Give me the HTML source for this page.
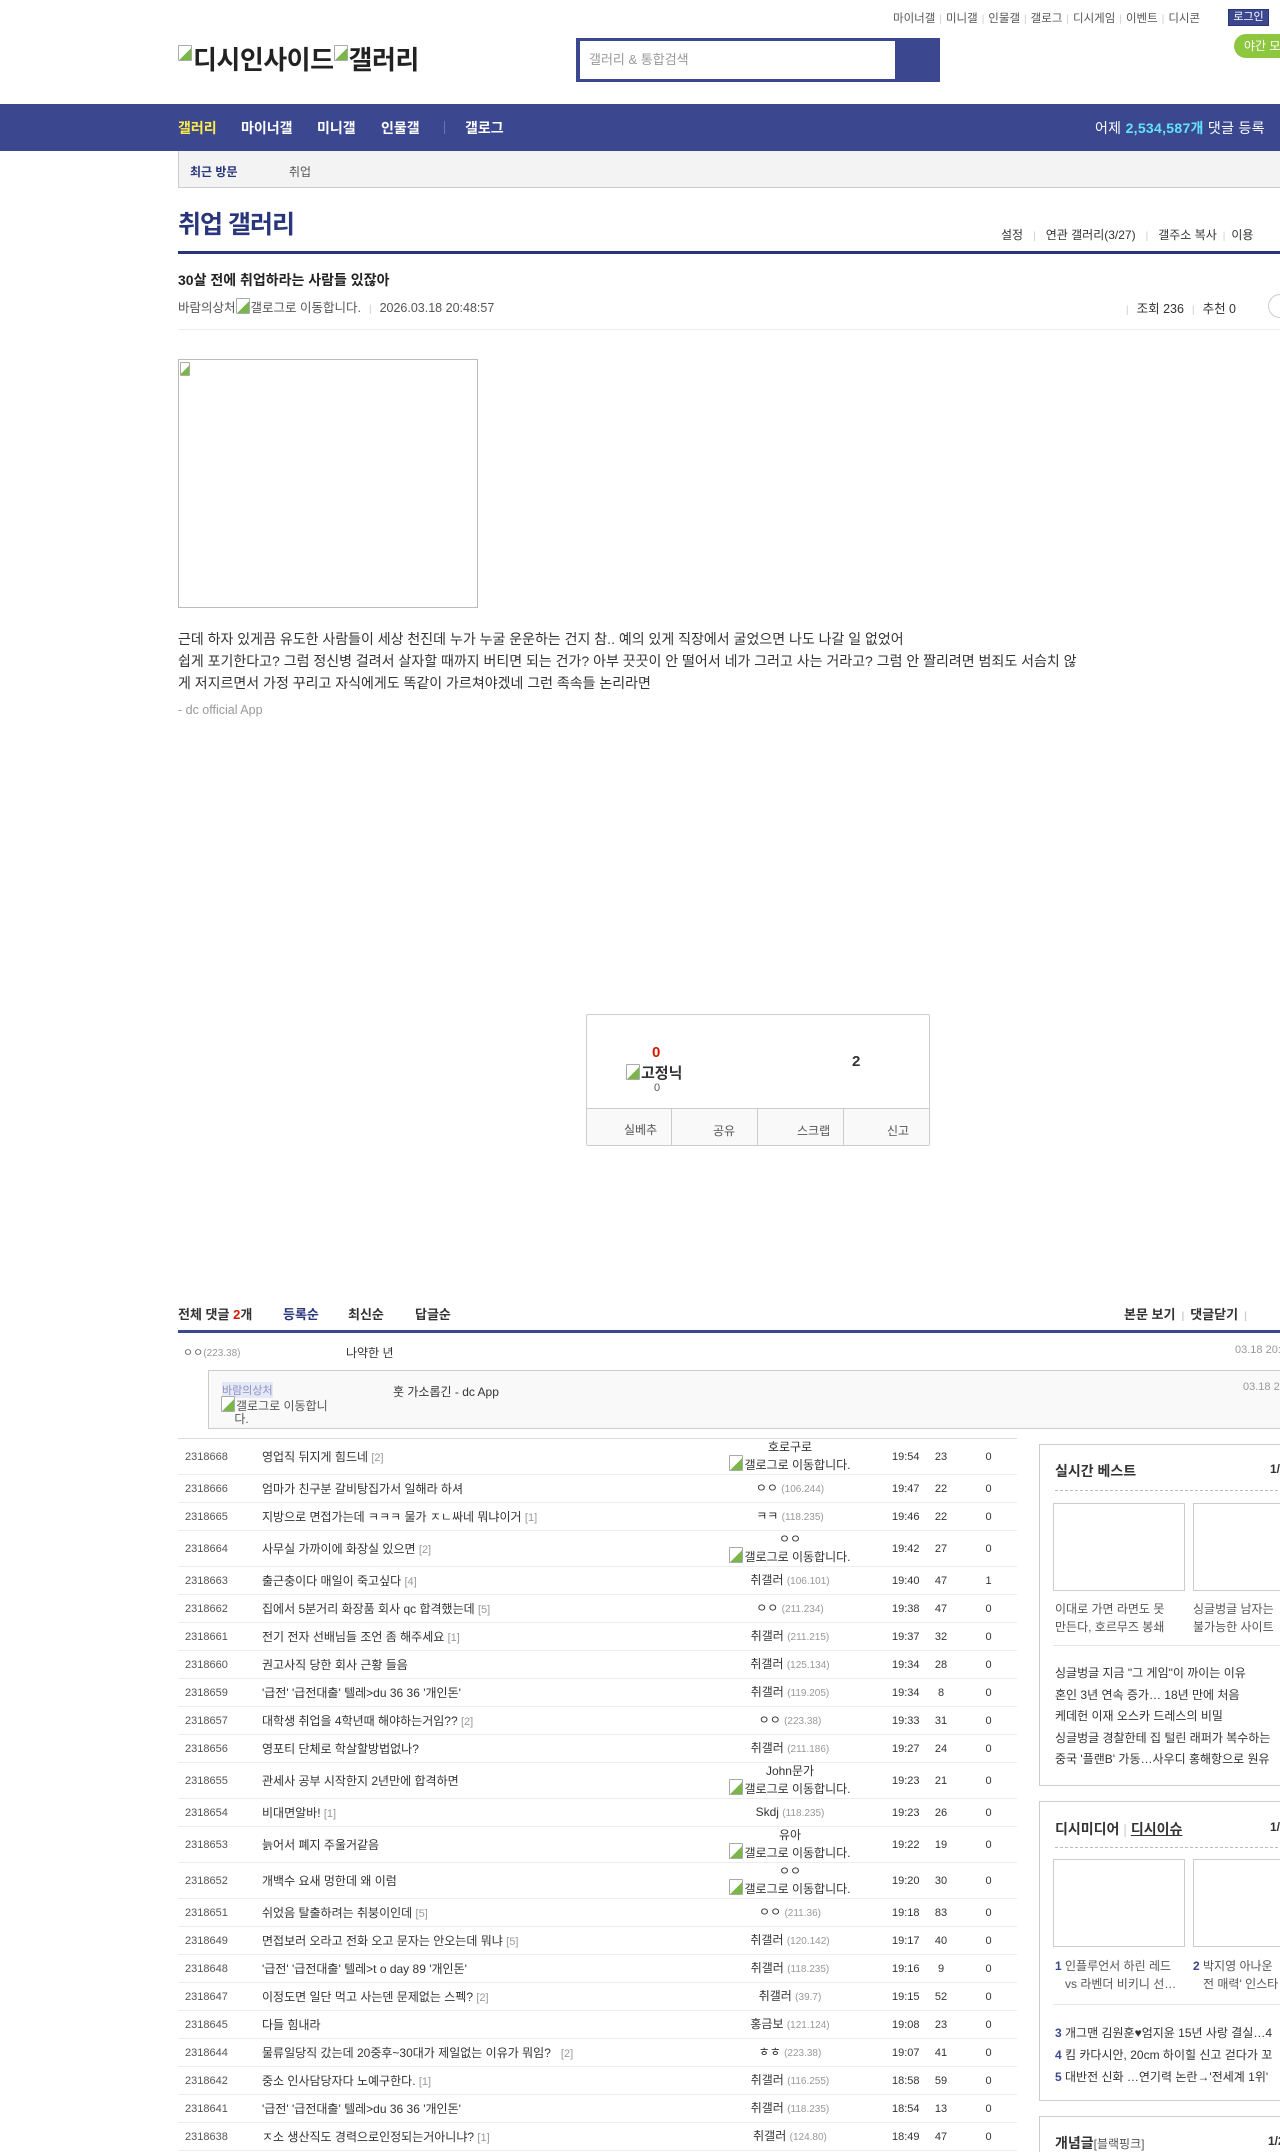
<!DOCTYPE html>
<html><head><meta charset="utf-8">
<style>
*{margin:0;padding:0;box-sizing:border-box}
html,body{width:1280px;height:2152px;overflow:hidden;background:#fff}
body{position:relative;font-family:"Liberation Sans","Noto Sans CJK KR",sans-serif;color:#333;font-size:12px}
.a{position:absolute;white-space:nowrap}
.bi{display:inline-block;width:14px;height:16px;border:1px solid #aaa;border-radius:1px;background:linear-gradient(135deg,#fff 55%,#7ab648 55%);vertical-align:-2px;margin-right:1px}
.top a{color:#555;font-size:11.5px;text-decoration:none}
.sep{color:#ccc;margin:0 4px;font-size:10px}
.nav span{color:#fff;font-weight:bold;font-size:14px;position:absolute;top:14px}
table{border-collapse:collapse;table-layout:fixed}
.lst{position:absolute;left:178px;top:1438px;width:839px;border-top:1px solid #ddd}
.lst td{border-bottom:1px solid #eee;font-size:12px;color:#333;padding:0;vertical-align:middle;white-space:nowrap}
.lst tr{height:28px}
.lst tr.t{height:36px}
.num{width:84px;padding-left:7px!important;font-size:11px!important;color:#555!important}
.tit{width:440px}
.wr{width:176px;text-align:center;line-height:15px}
.tm{width:44px;padding-left:14px!important;font-size:11px!important}
.vw{width:38px;text-align:center;font-size:11px!important}
.rc{width:57px;text-align:center;font-size:11px!important}
.ip{color:#999;font-size:10px}
.rp{color:#999;font-size:11px}
.box{position:absolute;left:1039px;width:280px;border:1px solid #ccc;background:#fff}
.box h3{position:absolute;left:15px;font-size:14px;color:#333}
.dash{position:absolute;left:15px;right:0;border-top:1px dashed #bbb}
.th{position:absolute;width:132px;height:88px;border:1px solid #ccc}
.sb{position:absolute;left:15px;font-size:12px;color:#333;white-space:nowrap}
.sb b{color:#3b4890}
</style></head><body>

<div class="a top" style="left:893px;top:10px;">
<a>마이너갤</a><span class="sep">|</span><a>미니갤</a><span class="sep">|</span><a>인물갤</a><span class="sep">|</span><a>갤로그</a><span class="sep">|</span><a>디시게임</a><span class="sep">|</span><a>이벤트</a><span class="sep">|</span><a>디시콘</a></div>
<div class="a" style="left:1228px;top:9px;width:41px;height:17px;background:#3b4890;border:1px solid #293577;color:#fff;font-size:11px;text-align:center;line-height:15px">로그인</div>
<div class="a" style="left:1234px;top:34px;width:70px;height:24px;background:#8dc63f;border-radius:12px;color:#fff;font-size:12px;line-height:24px;padding-left:10px">야간 모드</div>

<div class="a" style="left:178px;top:40px;font-size:26px;font-weight:bold;color:#222;letter-spacing:-0.5px"><span class="bi" style="vertical-align:8px"></span>디시인사이드<span class="bi" style="vertical-align:8px"></span>갤러리</div>

<div class="a" style="left:576px;top:38px;width:364px;height:44px;background:#3b4890"></div>
<div class="a" style="left:580px;top:41px;width:315px;height:38px;background:#fff;color:#999;font-size:13px;line-height:38px;padding-left:9px">갤러리 &amp; 통합검색</div>

<div class="a nav" style="left:0;top:104px;width:1280px;height:47px;background:#3b4890">
<span style="left:178px;color:#ffed45">갤러리</span>
<span style="left:241px">마이너갤</span>
<span style="left:317px">미니갤</span>
<span style="left:381px">인물갤</span>
<i class="a" style="left:444px;top:17px;width:1px;height:13px;background:#6a75b0"></i>
<span style="left:465px">갤로그</span>
<span style="left:1095px;font-weight:normal;font-size:14px;letter-spacing:0.3px">어제 <b style="color:#62e3f8">2,534,587개</b> 댓글 등록</span>
</div>

<div class="a" style="left:178px;top:151px;width:1110px;height:37px;background:#f3f3f3;border-left:1px solid #ccc;border-bottom:1px solid #ccc"></div>
<div class="a" style="left:190px;top:163px;font-size:12px;font-weight:bold;color:#29367c">최근 방문</div>
<div class="a" style="left:289px;top:163px;font-size:12px;color:#555">취업</div>

<div class="a" style="left:178px;top:205px;font-size:25px;font-weight:bold;color:#29367c;letter-spacing:-1px">취업 갤러리</div>
<div class="a" style="left:1001px;top:226px;font-size:12px;color:#333">설정<span class="sep" style="margin:0 10px">|</span>연관 갤러리(3/27)<span class="sep" style="margin:0 10px">|</span>갤주소 복사<span class="sep" style="margin:0 6px">|</span>이용</div>
<div class="a" style="left:178px;top:251px;width:1110px;height:3px;background:#29367c"></div>

<div class="a" style="left:178px;top:270px;font-size:14px;font-weight:bold;color:#222">30살 전에 취업하라는 사람들 있잖아</div>
<div class="a" style="left:178px;top:297px;font-size:12.5px;color:#555">바람의상처<span class="bi"></span>갤로그로 이동합니다.<span class="sep" style="margin:0 8px">|</span>2026.03.18 20:48:57</div>
<div class="a" style="left:1126px;top:298px;font-size:12.5px;color:#333"><span class="sep" style="margin:0 8px 0 0">|</span>조회 236<span class="sep" style="margin:0 8px">|</span>추천 0</div>
<div class="a" style="left:1268px;top:294px;width:24px;height:24px;border:1px solid #ccc;border-radius:12px"></div>
<div class="a" style="left:178px;top:329px;width:1110px;height:1px;background:#eee"></div>

<div class="a" style="left:178px;top:359px;width:300px;height:249px;border:1px solid #bbb"><span class="bi" style="position:absolute;left:1px;top:2px;width:10px;height:14px"></span></div>
<div class="a" style="left:178px;top:628px;font-size:14px;color:#333;line-height:22px;white-space:normal;width:920px">근데 하자 있게끔 유도한 사람들이 세상 천진데 누가 누굴 운운하는 건지 참.. 예의 있게 직장에서 굴었으면 나도 나갈 일 없었어<br>쉽게 포기한다고? 그럼 정신병 걸려서 살자할 때까지 버티면 되는 건가? 아부 끗끗이 안 떨어서 네가 그러고 사는 거라고? 그럼 안 짤리려면 범죄도 서슴치 않<br><span style="line-height:18px">게 저지르면서 가정 꾸리고 자식에게도 똑같이 가르쳐야겠네 그런 족속들 논리라면</span></div>
<div class="a" style="left:178px;top:703px;font-size:12.5px;color:#999">- dc official App</div>

<div class="a" style="left:586px;top:1014px;width:344px;height:132px;border:1px solid #ccc;border-radius:2px"></div>
<div class="a" style="left:652px;top:1044px;font-size:15px;font-weight:bold;color:#d31900">0</div>
<div class="a" style="left:626px;top:1062px;font-size:15px;font-weight:bold;color:#333"><span class="bi"></span>고정닉</div>
<div class="a" style="left:654px;top:1082px;font-size:11px;color:#555">0</div>
<div class="a" style="left:852px;top:1053px;font-size:15px;font-weight:bold;color:#333">2</div>
<div class="a" style="left:587px;top:1108px;width:342px;height:37px;background:#f9f9f9;border-top:1px solid #ccc"></div>
<div class="a" style="left:671px;top:1108px;width:1px;height:37px;background:#ccc"></div>
<div class="a" style="left:757px;top:1108px;width:1px;height:37px;background:#ccc"></div>
<div class="a" style="left:843px;top:1108px;width:1px;height:37px;background:#ccc"></div>
<div class="a" style="left:624px;top:1121px;font-size:12px;color:#555">실베추</div>
<div class="a" style="left:713px;top:1122px;font-size:12px;color:#555">공유</div>
<div class="a" style="left:797px;top:1122px;font-size:12px;color:#555">스크랩</div>
<div class="a" style="left:887px;top:1122px;font-size:12px;color:#555">신고</div>

<div class="a" style="left:178px;top:1304px;font-size:13px;font-weight:bold;color:#333">전체 댓글 <span style="color:#d31900">2</span>개</div>
<div class="a" style="left:283px;top:1304px;font-size:13px;font-weight:bold;color:#29367c">등록순</div>
<div class="a" style="left:348px;top:1304px;font-size:13px;font-weight:bold;color:#333">최신순</div>
<div class="a" style="left:415px;top:1304px;font-size:13px;font-weight:bold;color:#333">답글순</div>
<div class="a" style="left:1124px;top:1304px;font-size:13px;font-weight:bold;color:#333">본문 보기<span class="sep" style="margin:0 6px">|</span>댓글닫기<span class="sep" style="margin:0 6px">|</span></div>
<div class="a" style="left:178px;top:1330px;width:1110px;height:3px;background:#3b4890"></div>
<div class="a" style="left:183px;top:1344px;font-size:11px;color:#666">ㅇㅇ<span class="ip">(223.38)</span></div>
<div class="a" style="left:346px;top:1344px;font-size:12px;color:#333">나약한 년</div>
<div class="a" style="left:1235px;top:1344px;font-size:11px;color:#999">03.18 20:50</div>
<div class="a" style="left:208px;top:1370px;width:1090px;height:59px;background:#f9f9f9;border:1px solid #ccc"></div>
<div class="a" style="left:222px;top:1382px;font-size:11px;color:#8b93c4;background:#e5e8f5">바람의상처</div>
<div class="a" style="left:221px;top:1396px;font-size:12px;color:#555;line-height:13px"><span class="bi"></span>갤로그로 이동합니<br>&nbsp;&nbsp;&nbsp;&nbsp;다.</div>
<div class="a" style="left:393px;top:1383px;font-size:12px;color:#333">훗 가소롭긴 - dc App</div>
<div class="a" style="left:1243px;top:1381px;font-size:11px;color:#999">03.18 20:51</div>

<table class="lst">
<tr class="t"><td class="num">2318668</td><td class="tit">영업직 뒤지게 힘드네 <span class="rp">[2]</span></td><td class="wr">호로구로<br><span class="bi"></span>갤로그로 이동합니다.</td><td class="tm">19:54</td><td class="vw">23</td><td class="rc">0</td></tr>
<tr><td class="num">2318666</td><td class="tit">엄마가 친구분 갈비탕집가서 일해라 하셔</td><td class="wr">ㅇㅇ <span class="ip">(106.244)</span></td><td class="tm">19:47</td><td class="vw">22</td><td class="rc">0</td></tr>
<tr><td class="num">2318665</td><td class="tit">지방으로 면접가는데 ㅋㅋㅋ 물가 ㅈㄴ싸네 뭐냐이거 <span class="rp">[1]</span></td><td class="wr">ㅋㅋ <span class="ip">(118.235)</span></td><td class="tm">19:46</td><td class="vw">22</td><td class="rc">0</td></tr>
<tr class="t"><td class="num">2318664</td><td class="tit">사무실 가까이에 화장실 있으면 <span class="rp">[2]</span></td><td class="wr">ㅇㅇ<br><span class="bi"></span>갤로그로 이동합니다.</td><td class="tm">19:42</td><td class="vw">27</td><td class="rc">0</td></tr>
<tr><td class="num">2318663</td><td class="tit">출근충이다 매일이 죽고싶다 <span class="rp">[4]</span></td><td class="wr">취갤러 <span class="ip">(106.101)</span></td><td class="tm">19:40</td><td class="vw">47</td><td class="rc">1</td></tr>
<tr><td class="num">2318662</td><td class="tit">집에서 5분거리 화장품 회사 qc 합격했는데 <span class="rp">[5]</span></td><td class="wr">ㅇㅇ <span class="ip">(211.234)</span></td><td class="tm">19:38</td><td class="vw">47</td><td class="rc">0</td></tr>
<tr><td class="num">2318661</td><td class="tit">전기 전자 선배님들 조언 좀 해주세요 <span class="rp">[1]</span></td><td class="wr">취갤러 <span class="ip">(211.215)</span></td><td class="tm">19:37</td><td class="vw">32</td><td class="rc">0</td></tr>
<tr><td class="num">2318660</td><td class="tit">권고사직 당한 회사 근황 들음</td><td class="wr">취갤러 <span class="ip">(125.134)</span></td><td class="tm">19:34</td><td class="vw">28</td><td class="rc">0</td></tr>
<tr><td class="num">2318659</td><td class="tit">'급전' '급전대출' 텔레&gt;du 36 36 '개인돈'</td><td class="wr">취갤러 <span class="ip">(119.205)</span></td><td class="tm">19:34</td><td class="vw">8</td><td class="rc">0</td></tr>
<tr><td class="num">2318657</td><td class="tit">대학생 취업을 4학년때 해야하는거임?? <span class="rp">[2]</span></td><td class="wr">ㅇㅇ <span class="ip">(223.38)</span></td><td class="tm">19:33</td><td class="vw">31</td><td class="rc">0</td></tr>
<tr><td class="num">2318656</td><td class="tit">영포티 단체로 학살할방법없나?</td><td class="wr">취갤러 <span class="ip">(211.186)</span></td><td class="tm">19:27</td><td class="vw">24</td><td class="rc">0</td></tr>
<tr class="t"><td class="num">2318655</td><td class="tit">관세사 공부 시작한지 2년만에 합격하면</td><td class="wr">John문가<br><span class="bi"></span>갤로그로 이동합니다.</td><td class="tm">19:23</td><td class="vw">21</td><td class="rc">0</td></tr>
<tr><td class="num">2318654</td><td class="tit">비대면알바! <span class="rp">[1]</span></td><td class="wr">Skdj <span class="ip">(118.235)</span></td><td class="tm">19:23</td><td class="vw">26</td><td class="rc">0</td></tr>
<tr class="t"><td class="num">2318653</td><td class="tit">늙어서 폐지 주울거같음</td><td class="wr">유아<br><span class="bi"></span>갤로그로 이동합니다.</td><td class="tm">19:22</td><td class="vw">19</td><td class="rc">0</td></tr>
<tr class="t"><td class="num">2318652</td><td class="tit">개백수 요새 멍한데 왜 이럼</td><td class="wr">ㅇㅇ<br><span class="bi"></span>갤로그로 이동합니다.</td><td class="tm">19:20</td><td class="vw">30</td><td class="rc">0</td></tr>
<tr><td class="num">2318651</td><td class="tit">쉬었음 탈출하려는 취붕이인데 <span class="rp">[5]</span></td><td class="wr">ㅇㅇ <span class="ip">(211.36)</span></td><td class="tm">19:18</td><td class="vw">83</td><td class="rc">0</td></tr>
<tr><td class="num">2318649</td><td class="tit">면접보러 오라고 전화 오고 문자는 안오는데 뭐냐 <span class="rp">[5]</span></td><td class="wr">취갤러 <span class="ip">(120.142)</span></td><td class="tm">19:17</td><td class="vw">40</td><td class="rc">0</td></tr>
<tr><td class="num">2318648</td><td class="tit">'급전' '급전대출' 텔레&gt;t o day 89 '개인돈'</td><td class="wr">취갤러 <span class="ip">(118.235)</span></td><td class="tm">19:16</td><td class="vw">9</td><td class="rc">0</td></tr>
<tr><td class="num">2318647</td><td class="tit">이정도면 일단 먹고 사는덴 문제없는 스펙? <span class="rp">[2]</span></td><td class="wr">취갤러 <span class="ip">(39.7)</span></td><td class="tm">19:15</td><td class="vw">52</td><td class="rc">0</td></tr>
<tr><td class="num">2318645</td><td class="tit">다들 힘내라</td><td class="wr">홍금보 <span class="ip">(121.124)</span></td><td class="tm">19:08</td><td class="vw">23</td><td class="rc">0</td></tr>
<tr><td class="num">2318644</td><td class="tit">물류일당직 갔는데 20중후~30대가 제일없는 이유가 뭐임? &nbsp;&nbsp;<span class="rp">[2]</span></td><td class="wr">ㅎㅎ <span class="ip">(223.38)</span></td><td class="tm">19:07</td><td class="vw">41</td><td class="rc">0</td></tr>
<tr><td class="num">2318642</td><td class="tit">중소 인사담당자다 노예구한다. <span class="rp">[1]</span></td><td class="wr">취갤러 <span class="ip">(116.255)</span></td><td class="tm">18:58</td><td class="vw">59</td><td class="rc">0</td></tr>
<tr><td class="num">2318641</td><td class="tit">'급전' '급전대출' 텔레&gt;du 36 36 '개인돈'</td><td class="wr">취갤러 <span class="ip">(118.235)</span></td><td class="tm">18:54</td><td class="vw">13</td><td class="rc">0</td></tr>
<tr><td class="num">2318638</td><td class="tit">ㅈ소 생산직도 경력으로인정되는거아니냐? <span class="rp">[1]</span></td><td class="wr">취갤러 <span class="ip">(124.80)</span></td><td class="tm">18:49</td><td class="vw">47</td><td class="rc">0</td></tr>
</table>

<div class="box" style="top:1444px;height:342px">
<h3 style="top:16px">실시간 베스트</h3><span class="a" style="left:230px;top:17px;font-size:12px;font-weight:bold">1/5</span>
<div class="dash" style="top:45px"></div>
<div class="th" style="left:13px;top:58px"></div><div class="th" style="left:153px;top:58px"></div>
<div class="sb" style="top:155px;line-height:18px;color:#555">이대로 가면 라면도 못<br>만든다, 호르무즈 봉쇄</div>
<div class="sb" style="left:153px;top:155px;line-height:18px;color:#555">싱글벙글 남자는<br>불가능한 사이트</div>
<div class="a" style="left:13px;top:200px;width:270px;border-top:1px solid #e5e5e5"></div>
<div class="sb" style="top:218px;line-height:21.5px">싱글벙글 지금 "그 게임"이 까이는 이유<br>혼인 3년 연속 증가… 18년 만에 처음<br>케데헌 이재 오스카 드레스의 비밀<br>싱글벙글 경찰한테 집 털린 래퍼가 복수하는<br>중국 '플랜B' 가동…사우디 홍해항으로 원유</div>
</div>

<div class="box" style="top:1801px;height:300px">
<h3 style="top:17px">디시미디어 <span style="color:#ccc;font-weight:normal">|</span> <u>디시이슈</u></h3><span class="a" style="left:230px;top:18px;font-size:12px;font-weight:bold">1/2</span>
<div class="dash" style="top:45px"></div>
<div class="th" style="left:13px;top:57px"></div><div class="th" style="left:153px;top:57px"></div>
<div class="sb" style="top:155px;line-height:18px;color:#555"><b>1</b> 인플루언서 하린 레드<br>&nbsp;&nbsp;&nbsp;vs 라벤더 비키니 선…</div>
<div class="sb" style="left:153px;top:155px;line-height:18px;color:#555"><b>2</b> 박지영 아나운<br>&nbsp;&nbsp;&nbsp;전 매력' 인스타</div>
<div class="a" style="left:13px;top:202px;width:270px;border-top:1px solid #e5e5e5"></div>
<div class="sb" style="top:220px;line-height:22px"><b>3</b> 개그맨 김원훈♥엄지윤 15년 사랑 결실…4<br><b>4</b> 킴 카다시안, 20cm 하이힐 신고 걷다가 꼬<br><b>5</b> 대반전 신화 …연기력 논란→'전세계 1위'</div>
</div>

<div class="box" style="top:2116px;height:60px">
<h3 style="top:16px">개념글<span style="font-weight:normal;font-size:12px;color:#555">[블랙핑크]</span></h3><span class="a" style="left:228px;top:17px;font-size:12px;font-weight:bold">1/2</span>
</div>

</body></html>
